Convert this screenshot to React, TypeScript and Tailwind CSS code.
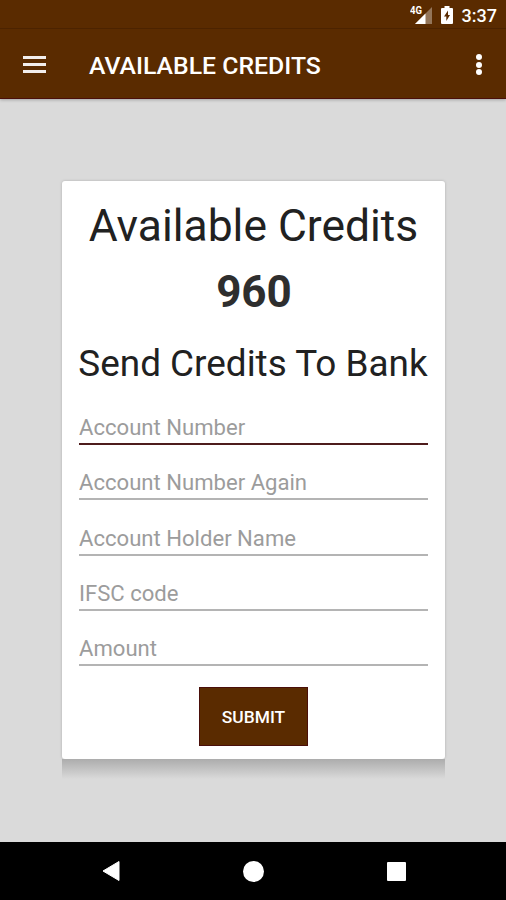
const fields = [
  { name: "accountNumber", label: "Account Number" },
  { name: "accountNumberAgain", label: "Account Number Again" },
  { name: "accountHolder", label: "Account Holder Name" },
  { name: "ifsc", label: "IFSC code" },
  { name: "amount", label: "Amount" },
];

function StatusBar() {
  return (
    <div className="flex h-[29px] items-start justify-end border-b border-[#4c2300] pr-[9px]">
      <svg width="24" height="20" viewBox="0 0 24 20" className="mt-[5px]" aria-hidden>
        <path d="M22 2V19H5z" fill="#fff" fillOpacity="0.35" />
        <path d="M15.5 8.5V19H5z" fill="#fff" />
        <text x="0" y="9" fill="#fff" fontSize="10.5" fontWeight="700" fontFamily="Roboto, sans-serif" textLength="12" lengthAdjust="spacingAndGlyphs">
          4G
        </text>
      </svg>
      <svg width="12" height="18" viewBox="0 0 12 18" className="mt-[6px] ml-[7px]" aria-hidden>
        <path d="M3.500 0h5v2H11a1 1 0 0 1 1 1v14a1 1 0 0 1-1 1H1a1 1 0 0 1-1-1V3a1 1 0 0 1 1-1h2.500z" fill="#fff" />
        <path d="M7 4.500v4.500h2L5.300 15v-4.500H3z" fill="#5a2b00" />
      </svg>
      <span className="ml-[9px] mt-[5px] text-[18px] font-medium leading-[22px] text-white">3:37</span>
    </div>
  );
}

function AppBar() {
  return (
    <header className="flex h-[69px] items-center pl-[23px] pr-[24px] text-white">
      <button type="button" aria-label="Open menu" className="mt-[2px] flex w-[23px] flex-col gap-[4px]">
        <span className="h-[3px] bg-[#f3eeec]" />
        <span className="h-[3px] bg-[#f3eeec]" />
        <span className="h-[3px] bg-[#f3eeec]" />
      </button>
      <h1 className="ml-[43px] mt-[5px] whitespace-nowrap text-[24.8px] font-medium leading-[28px]">
        AVAILABLE CREDITS
      </h1>
      <button type="button" aria-label="More options" className="ml-auto mt-[2px] flex flex-col gap-[1.5px]">
        <span className="size-[6px] rounded-full bg-white" />
        <span className="size-[6px] rounded-full bg-white" />
        <span className="size-[6px] rounded-full bg-white" />
      </button>
    </header>
  );
}

function CreditsCard() {
  return (
    <section>
      <div className="h-[578px] rounded-[3px] bg-white px-[17px] pt-[15px] text-center text-[#212121] shadow-[0_0_3px_rgba(0,0,0,0.2)]">
        <h2 className="whitespace-nowrap text-[44.4px] leading-[60px]">Available Credits</h2>
        <p className="h-[70px] pt-[1px] pl-[1px] text-[44px] font-bold leading-[70px] text-[#2e2e2e]">960</p>
        <h3 className="-ml-px h-[63.5px] whitespace-nowrap pt-[11px] text-[36.9px] leading-[53px]">
          Send Credits To Bank
        </h3>
        <form>
          {fields.map(({ name, label }, i) => (
            <div
              key={name}
              className={`flex h-[55.4px] items-end border-b-2 ${i === 0 ? "border-[#4e1c1c]" : "border-[#b4b4b4]"}`}
            >
              <input
                name={name}
                placeholder={label}
                className="h-[31px] w-full text-[22.1px] leading-[31px] outline-none placeholder:text-[#9c9c9c] placeholder:opacity-100"
              />
            </div>
          ))}
          <button
            type="button"
            className="mt-[20.5px] h-[59px] w-[109px] border border-[#4a0f0a] bg-[#5a2b00] pt-[2px] text-[17.4px] font-medium text-white"
          >
            SUBMIT
          </button>
        </form>
      </div>
      <div className="h-[20px] bg-gradient-to-b from-[#acacac] to-[#dadada]" />
    </section>
  );
}

function NavBar() {
  return (
    <nav className="flex h-[58px] items-center justify-between bg-black pl-[102px] pr-[100px]">
      <svg width="18" height="22" viewBox="0 0 18 22" aria-label="Back">
        <path d="M17 1.500v19L1 11z" fill="#fff" stroke="#fff" strokeLinejoin="round" />
      </svg>
      <span className="size-[21px] rounded-full bg-white" />
      <span className="size-[19px] rounded-[1px] bg-white" />
    </nav>
  );
}

export default function App() {
  return (
    <div className="flex h-[900px] w-[506px] flex-col overflow-hidden bg-[#dadada] font-['Roboto',sans-serif]">
      <div className="h-[99px] shrink-0 border-b border-[#4a0f0a] bg-[#5a2b00] shadow-[0_1px_3px_rgba(0,0,0,0.25)]">
        <StatusBar />
        <AppBar />
      </div>
      <main className="flex-1 pl-[62px] pr-[61px] pt-[82px]">
        <CreditsCard />
      </main>
      <NavBar />
    </div>
  );
}
